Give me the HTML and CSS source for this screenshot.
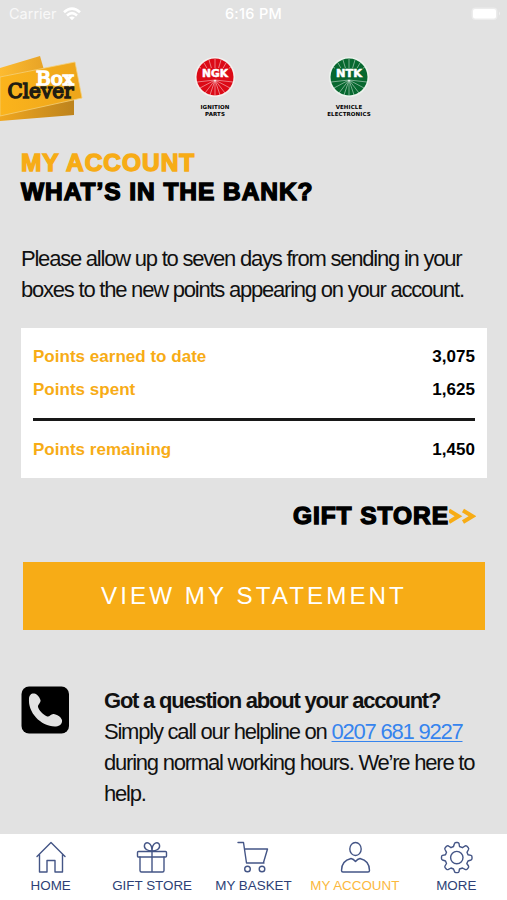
FILE: index.html
```html
<!DOCTYPE html>
<html lang="en">
<head>
<meta charset="utf-8">
<title>My Account</title>
<link rel="stylesheet" href="styles.css">
</head>
<body>
<div class="app">
  <header class="status">
    <div class="carrier">Carrier
      <svg width="18" height="14" viewBox="0 0 18 14" fill="none" stroke="#fff" stroke-width="2.6"><path d="M1 5.2Q9-2 17 5.2M4 8.4Q9 4 14 8.4"/><path d="M9 13.2 6.2 10.4Q9 8.4 11.8 10.4Z" fill="#fff" stroke="none"/></svg>
    </div>
    <div class="time">6:16 PM</div>
    <div class="power">
      <svg width="30" height="14" viewBox="0 0 30 14"><rect x=".5" y=".5" width="26" height="12.500" rx="4" fill="#fff" opacity=".35"/><rect x="2" y="2" width="23" height="9.500" rx="2" fill="#fff"/><path d="M28 4.500q2 2 0 4z" fill="#fff" opacity=".5"/></svg>
    </div>
  </header>

  <div class="brands">
    <svg class="boxclever" width="84" height="70" viewBox="0 0 84 70">
      <defs>
        <linearGradient id="top" x1="0" x2="1"><stop offset="0" stop-color="#fdbb30"/><stop offset="1" stop-color="#e5a126"/></linearGradient>
        <linearGradient id="mid" x1="0" x2="1"><stop offset="0" stop-color="#fbb41c"/><stop offset="1" stop-color="#eda51b"/></linearGradient>
        <linearGradient id="low" x1="0" x2="1"><stop offset="0" stop-color="#f0a71f"/><stop offset="1" stop-color="#bd831d"/></linearGradient>
      </defs>
      <path d="M0 16 40 4 48 32 0 40Z" fill="url(#top)"/>
      <path d="M0 52 74 38 74 63 0 69Z" fill="url(#low)"/>
      <path d="M0 25 75 10 82 46 0 64Z" fill="url(#mid)" stroke="#f4cf79" stroke-width=".8"/>
      <text class="slab" x="36" y="33" textLength="38" lengthAdjust="spacingAndGlyphs" font-size="19" fill="#fff" stroke="#fff">Box</text>
      <text class="slab" x="7.500" y="46" textLength="66" lengthAdjust="spacingAndGlyphs" font-size="20.500" fill="#211d12" stroke="#211d12">Clever</text>
    </svg>
    <div class="brand">
      <svg width="42" height="42" viewBox="-21 -21 42 42">
        <circle r="20" fill="#f4f1ef"/><circle r="18.500" fill="#dc0a17"/>
        <path class="rays" d="M0 3V19M0 3 5 18M0 3-5 18M0 3 10 16M0 3-10 16M0 3 15 11M0 3-15 11M0 3 18 5M0 3-18 5M0-7V-18M3-7 6-17M-3-7-6-17M7-7 11-14M-7-7-11-14M11-7 16-10M-11-7-16-10"/>
        <rect x="-14" y="-9" width="28" height="10" fill="#dc0a17"/>
        <text class="mark" x="-13" y="-.5" textLength="26" lengthAdjust="spacingAndGlyphs">NGK</text>
      </svg>
      <p>IGNITION<br>PARTS</p>
    </div>
    <div class="brand">
      <svg width="42" height="42" viewBox="-21 -21 42 42">
        <circle r="20" fill="#edf3ee"/><circle r="18.500" fill="#07682f"/>
        <path class="rays" d="M0 3V19M0 3 5 18M0 3-5 18M0 3 10 16M0 3-10 16M0 3 15 11M0 3-15 11M0 3 18 5M0 3-18 5M0-7V-18M3-7 6-17M-3-7-6-17M7-7 11-14M-7-7-11-14M11-7 16-10M-11-7-16-10"/>
        <rect x="-14" y="-9" width="28" height="10" fill="#07682f"/>
        <text class="mark" x="-13" y="-.5" textLength="26" lengthAdjust="spacingAndGlyphs">NTK</text>
      </svg>
      <p>VEHICLE<br>ELECTRONICS</p>
    </div>
  </div>

  <main>
    <h1><span class="accent">MY ACCOUNT</span><br>WHAT’S IN THE BANK?</h1>
    <p class="copy intro">Please allow up to seven days from sending in your<br>boxes to the new points appearing on your account.</p>

    <section class="points">
      <div class="row"><span>Points earned to date</span><b>3,075</b></div>
      <div class="row"><span>Points spent</span><b>1,625</b></div>
      <div class="row total"><span>Points remaining</span><b>1,450</b></div>
    </section>

    <div class="store">GIFT STORE<svg width="27" height="18" viewBox="0 0 27 18" fill="none" stroke="#f7ac16" stroke-width="4"><path d="M0 3.500 9.500 9.200 0 15M14 3.500 23.500 9.200 14 15"/></svg></div>
    <div class="button">VIEW MY STATEMENT</div>

    <section class="help">
      <svg width="49" height="48" viewBox="0 0 49 48"><rect x=".5" y=".5" width="47.500" height="47" rx="7.500"/><path fill="#e2e2e2" d="M8 13C8 9 10.500 7 13.300 7.500C16 8 18.500 11 19.500 14C20 17 16.500 18.500 17 21C18 24.500 22 28.500 25.700 30.300C28.500 31.500 29.500 27.800 32.500 28C36 28.300 40 31 41 34C41.500 37.500 39 40 35 40.500C28 41 20 37 15 31.500C10 26 7.500 19 8 13Z"/></svg>
      <p class="copy"><strong>Got a question about your account?</strong><br>Simply call our helpline on <span class="phone">0207 681 9227</span><br>during normal working hours. We’re here to<br>help.</p>
    </section>
  </main>

  <nav>
    <div class="tab">
      <svg width="34" height="34" viewBox="0 0 34 34"><path d="M3 16.500 17 2.500 31 16.500M5.500 14.500V32H13V20.500H21V32H28.500V14.500"/></svg>HOME</div>
    <div class="tab">
      <svg width="34" height="34" viewBox="0 0 34 34"><rect x="2.500" y="11.500" width="29" height="5.500" rx="1"/><path d="M5 17V30.500Q5 32 6.500 32H27.500Q29 32 29 30.500V17M17 11.500V32M17 11C13 11 8.500 9 9.500 5C10.500 1 17 2 17 11C17 2 23.500 1 24.500 5C25.500 9 21 11 17 11"/></svg>GIFT STORE</div>
    <div class="tab">
      <svg width="34" height="34" viewBox="0 0 34 34"><path d="M2 2.500H7.500L10.500 23H28M8.500 9H31.500L27.500 22.500"/><circle cx="11.500" cy="29" r="2.800"/><circle cx="26" cy="29" r="2.800"/></svg>MY BASKET</div>
    <div class="tab active">
      <svg width="34" height="34" viewBox="0 0 34 34"><ellipse cx="17.500" cy="9" rx="5.700" ry="6.500"/><path d="M13 18.500Q15.500 19 17.500 21.500Q19.500 19 22 18.500C28.500 20 31.500 24 31.500 30.500Q31.500 32 30 32H5Q3.500 32 3.500 30.500C3.500 24 6.500 20 13 18.500Z"/></svg>MY ACCOUNT</div>
    <div class="tab">
      <svg width="34" height="34" viewBox="0 0 34 34"><path d="M15.500 3.500Q15.800 2.500 17 2.500H18.500Q19.700 2.500 20 3.500L20.500 6.500L23.500 7.700L26 6Q27 5.500 28 6.300L29.300 7.700Q30 8.500 29.500 9.500L28 12.300L29 14.800L32 15.400Q33 15.800 33 17V18.500Q33 19.600 32 20L29 21L27.800 23.500L29.500 26Q30 27 29.300 27.800L28 29.200Q27 30 26 29.400L23.500 28L20.500 29L20 31.500Q19.700 32.600 18.500 32.600H17Q15.800 32.600 15.500 31.500L14.500 29L12 28L9.500 29.400Q8.500 30 7.500 29.200L6.200 27.800Q5.500 27 6 26L7.500 23.500L6.500 21L3.500 20Q2.500 19.600 2.500 18.500V17Q2.500 15.800 3.500 15.400L6.500 14.800L7.500 12.300L6 9.500Q5.500 8.500 6.200 7.700L7.500 6.300Q8.500 5.500 9.500 6L12 7.700L14.500 6.500Z"/><circle cx="17.800" cy="17.600" r="6.200"/></svg>MORE</div>
  </nav>
</div>
</body>
</html>
```

FILE: styles.css
```css
* { box-sizing: border-box; }
body, h1, p { margin: 0; }
svg { display: block; flex: none; }
body { background: #e2e2e2; color: #000; font-family: "Liberation Sans", Arial, sans-serif; }
.app { width: 507px; height: 900px; display: flex; flex-direction: column; overflow: hidden; }

.status { height: 27px; display: grid; grid-template-columns: 1fr auto 1fr; align-items: center; padding: 1px 6px 0 9px; color: #fff; font: 400 14.500px/24px Inter, sans-serif; }
.carrier { display: flex; gap: 6px; align-items: center; color: #f8f8f8; }
.time { font-weight: 500; letter-spacing: .300px; margin-right: 3px; }
.power { justify-self: end; }

.brands { height: 121px; display: grid; grid-template-columns: 148px 134px 134px; align-items: start; padding-top: 25px; }
.brand { display: flex; flex-direction: column; align-items: center; padding-top: 4px; }
.brand p { margin-top: 6px; text-align: center; font: 700 5.500px/7px "DejaVu Sans", sans-serif; white-space: nowrap; letter-spacing: .100px; }
.slab { font-family: "DejaVu Serif", serif; font-weight: 400; stroke-width: 1.500px; }
.mark { font: 700 10.500px "DejaVu Sans", sans-serif; fill: #fff; stroke: #fff; stroke-width: .5px; }
.rays { fill: none; stroke: #fff; stroke-width: .7px; opacity: .65; }

main { flex: 1; padding: 0 20px 0 21px; }
h1, .store { font-weight: 700; font-size: 24.500px; letter-spacing: .950px; -webkit-text-stroke: 1.400px currentColor; }
h1 { line-height: 29px; }
.accent { color: #f7ac16; }
.copy { font-size: 22px; line-height: 30.700px; letter-spacing: -1.220px; white-space: nowrap; color: #111; }
.intro { margin-top: 38px; }

.points { height: 150px; margin-top: 23px; padding: 12px 12px 0; background: #fff; font-size: 17px; font-weight: 700; letter-spacing: .020px; }
.row { height: 33px; display: flex; justify-content: space-between; line-height: 34px; color: #f7ac16; }
.row b { color: #000; }
.total { height: 48px; margin-top: 12px; padding-top: 12px; border-top: 3px solid #181818; }

.store { display: flex; justify-content: flex-end; align-items: center; height: 30px; margin-top: 23px; padding-right: 11px; }
.button { height: 68px; margin: 31px 2px 0; background: #f7ac16; color: #fff; text-align: center; font-size: 24.200px; line-height: 68px; letter-spacing: 3.050px; }

.help { display: flex; gap: 34px; margin-top: 56px; }
.phone { color: #3684ee; text-decoration: underline; text-decoration-thickness: 1px; text-underline-offset: 2px; }

nav { height: 66px; display: grid; grid-template-columns: repeat(5, 1fr); background: #fff; }
.tab { display: flex; flex-direction: column; align-items: center; padding-top: 6px; color: #2d3f76; font-size: 13.400px; line-height: 15px; white-space: nowrap; gap: 4px; }
.tab svg { fill: none; stroke: #445586; stroke-width: 1.400px; stroke-linejoin: round; stroke-linecap: round; }
.tab.active { color: #fbb83d; }
```
